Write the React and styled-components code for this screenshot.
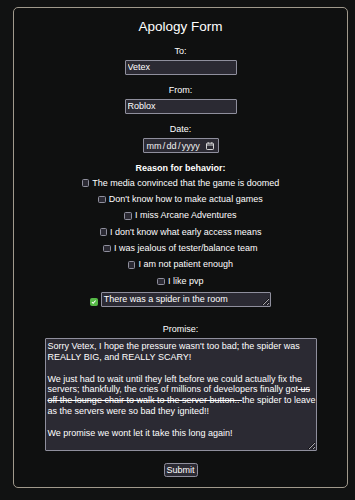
import React from 'react';
import styled, { createGlobalStyle } from 'styled-components';

const GlobalStyle = createGlobalStyle`
  html, body {
    margin: 0;
    padding: 0;
    background: #111212;
  }
  body {
    font-family: "Liberation Sans", Arial, sans-serif;
    color: #fff;
  }
`;

const Card = styled.form`
  box-sizing: border-box;
  width: 335px;
  height: 481px;
  margin: 7px 0 0 13px;
  padding: 11px 0 0;
  border: 1.5px solid #a0998c;
  border-radius: 5px;
  background: #0f1010;
  display: flex;
  flex-direction: column;
  align-items: center;
`;

const Title = styled.h1`
  margin: 0 0 11px;
  font-size: 13.5px;
  line-height: 16px;
  font-weight: normal;
`;

const Label = styled.div`
  font-size: 9px;
  line-height: 11px;
  font-weight: ${(p) => (p.$bold ? 'bold' : 'normal')};
  margin-top: ${(p) => p.$top || 0}px;
  margin-bottom: 3px;
`;

const TextInput = styled.input`
  box-sizing: border-box;
  width: 112px;
  height: 14.5px;
  margin: 0 0 10.5px;
  padding: 0 2px;
  background: #2b2a33;
  border: 1px solid #8f8f9d;
  border-radius: 1px;
  color: #fff;
  font: 9px "Liberation Sans", Arial, sans-serif;
  outline: none;
`;

const DateBox = styled.div`
  box-sizing: border-box;
  width: 76px;
  height: 15px;
  margin-bottom: 10px;
  padding: 0 4px 0 3px;
  background: #2b2a33;
  border: 1px solid #8f8f9d;
  border-radius: 1px;
  display: flex;
  align-items: center;
  justify-content: space-between;
  font-size: 9px;
  word-spacing: -1.2px;
  color: #f2f2f2;
`;

const Reasons = styled.div`
  display: flex;
  flex-direction: column;
  align-items: center;
  gap: 5.4px;
  margin-top: 0.5px;
`;

const Row = styled.label`
  display: flex;
  align-items: ${(p) => (p.$bottom ? 'flex-end' : 'center')};
  gap: 3px;
  font-size: 9px;
  line-height: 11px;
`;

const Box = styled.span`
  box-sizing: border-box;
  width: 7.5px;
  height: 7.5px;
  border-radius: 1.5px;
  border: 1px solid ${(p) => (p.$checked ? '#56b947' : '#8f8f9d')};
  background: ${(p) => (p.$checked ? '#56b947' : '#2b2a33')};
  display: flex;
  align-items: center;
  justify-content: center;
  margin-bottom: ${(p) => (p.$checked ? '1.5px' : '0')};
`;

const OtherInput = styled.textarea`
  box-sizing: border-box;
  width: 170px;
  height: 15px;
  margin: 0;
  padding: 1px 2px;
  background: #2b2a33;
  border: 1px solid #8f8f9d;
  border-radius: 1px;
  color: #fff;
  font: 9px/11px "Liberation Sans", Arial, sans-serif;
  resize: both;
  overflow: hidden;
  outline: none;
`;

const PromiseBox = styled.div`
  box-sizing: border-box;
  width: 272px;
  height: 112.5px;
  padding: 2px;
  background: #2b2a33;
  border: 1px solid #8f8f9d;
  border-radius: 1px;
  font-size: 9px;
  line-height: 10.8px;
  color: #fff;
  resize: both;
  overflow: hidden;
  margin-bottom: 12px;
`;

const Line = styled.div`
  white-space: pre;
  min-height: 10.8px;
`;

const Struck = styled.s`
  text-decoration-thickness: 1px;
`;

const SubmitButton = styled.button`
  box-sizing: border-box;
  width: 34px;
  height: 14px;
  padding: 0;
  background: #2b2a33;
  border: 1px solid #8f8f9d;
  border-radius: 2.5px;
  color: #fff;
  font: 9px "Liberation Sans", Arial, sans-serif;
`;

const reasons = [
  'The media convinced that the game is doomed',
  "Don't know how to make actual games",
  'I miss Arcane Adventures',
  "I don't know what early access means",
  'I was jealous of tester/balance team',
  'I am not patient enough',
  'I like pvp',
];

const CalendarIcon = () => (
  <svg width="8" height="8" viewBox="0 0 8 8" fill="none" stroke="#e8e8e8" strokeWidth="0.9">
    <rect x="0.5" y="1.2" width="7" height="6.3" rx="0.8" />
    <line x1="0.5" y1="3" x2="7.5" y2="3" />
    <line x1="2.2" y1="0.2" x2="2.2" y2="1.6" />
    <line x1="5.8" y1="0.2" x2="5.8" y2="1.6" />
  </svg>
);

const Check = () => (
  <svg width="6" height="6" viewBox="0 0 6 6" fill="none" stroke="#fff" strokeWidth="1.1">
    <polyline points="1,3.1 2.4,4.5 5,1.4" />
  </svg>
);

export default function App() {
  return (
    <>
      <GlobalStyle />
      <Card onSubmit={(e) => e.preventDefault()}>
        <Title>Apology Form</Title>

        <Label>To:</Label>
        <TextInput defaultValue="Vetex" />

        <Label>From:</Label>
        <TextInput defaultValue="Roblox" />

        <Label>Date:</Label>
        <DateBox>
          <span>mm / dd / yyyy</span>
          <CalendarIcon />
        </DateBox>

        <Label $bold>Reason for behavior:</Label>
        <Reasons>
          {reasons.map((r) => (
            <Row key={r}>
              <Box />
              {r}
            </Row>
          ))}
          <Row $bottom>
            <Box $checked>
              <Check />
            </Box>
            <OtherInput rows={1} defaultValue="There was a spider in the room" />
          </Row>
        </Reasons>

        <Label $top={17}>Promise:</Label>
        <PromiseBox>
          <Line>Sorry Vetex, I hope the pressure wasn't too bad; the spider was</Line>
          <Line>REALLY BIG, and REALLY SCARY!</Line>
          <Line />
          <Line>We just had to wait until they left before we could actually fix the</Line>
          <Line>
            servers; thankfully, the cries of millions of developers finally got<Struck> us</Struck>
          </Line>
          <Line>
            <Struck>off the lounge chair to walk to the server button.. </Struck>the spider to leave
          </Line>
          <Line>as the servers were so bad they ignited!!</Line>
          <Line />
          <Line>We promise we wont let it take this long again!</Line>
        </PromiseBox>

        <SubmitButton type="submit">Submit</SubmitButton>
      </Card>
    </>
  );
}
